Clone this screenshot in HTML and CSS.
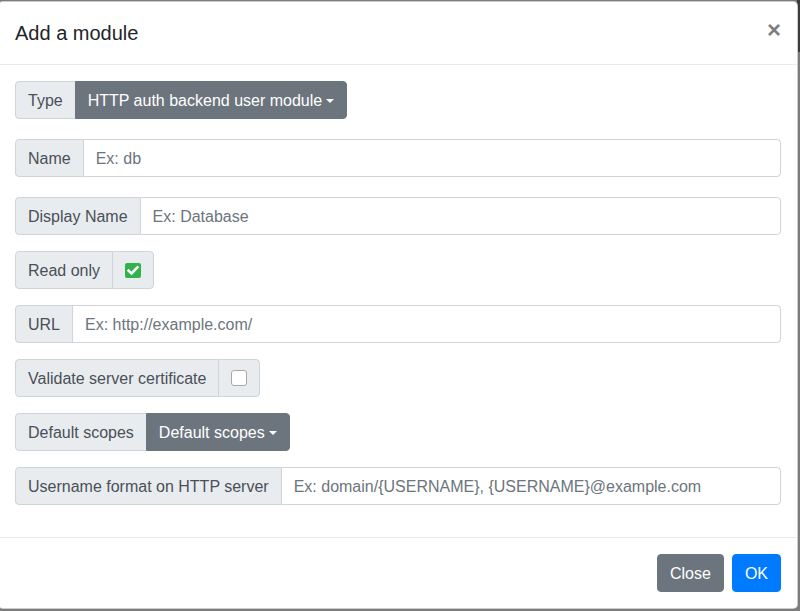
FILE: index.html
```html
<!DOCTYPE html>
<html lang="en">
<head>
<meta charset="utf-8">
<title>Add a module</title>
<link rel="stylesheet" href="styles.css">
</head>
<body>
<div class="modal">
  <div class="modal-header">
    <h5 class="modal-title">Add a module</h5>
    <button class="close" type="button" aria-label="Close">×</button>
  </div>
  <div class="modal-body">
    <div class="input-group wide-gap">
      <span class="addon">Type</span>
      <button class="btn btn-secondary dropdown-toggle joined" type="button">HTTP auth backend user module</button>
    </div>
    <div class="input-group wide-gap">
      <span class="addon">Name</span>
      <input class="form-control" type="text" placeholder="Ex: db">
    </div>
    <div class="input-group">
      <span class="addon">Display Name</span>
      <input class="form-control" type="text" placeholder="Ex: Database">
    </div>
    <div class="input-group">
      <span class="addon">Read only</span>
      <span class="addon check-addon"><input class="check" type="checkbox" checked></span>
    </div>
    <div class="input-group">
      <span class="addon">URL</span>
      <input class="form-control" type="text" placeholder="Ex: http://example.com/">
    </div>
    <div class="input-group">
      <span class="addon">Validate server certificate</span>
      <span class="addon check-addon"><input class="check" type="checkbox"></span>
    </div>
    <div class="input-group">
      <span class="addon">Default scopes</span>
      <button class="btn btn-secondary dropdown-toggle joined" type="button">Default scopes</button>
    </div>
    <div class="input-group">
      <span class="addon">Username format on HTTP server</span>
      <input class="form-control" type="text" placeholder="Ex: domain/{USERNAME}, {USERNAME}@example.com">
    </div>
  </div>
  <div class="modal-footer">
    <button class="btn btn-secondary" type="button">Close</button>
    <button class="btn btn-primary" type="button">OK</button>
  </div>
</div>
</body>
</html>
```
FILE: styles.css
```css
* { box-sizing: border-box; }

html, body {
  margin: 0;
  height: 100%;
}

body {
  background:
    linear-gradient(to right, transparent 797px, #3b3b3b 797px) top left / 100% 52px no-repeat,
    #7c7c7c;
  font-family: "Liberation Sans", Arial, sans-serif;
  font-size: 16px;
  line-height: 1.5;
  color: #212529;
  overflow: hidden;
}

.modal {
  width: 800px;
  margin: 1px 0 0 -2px;
  background: #fff;
  border: 1px solid rgba(0, 0, 0, 0.2);
  border-radius: 4.8px;
  display: flex;
  flex-direction: column;
}

.modal-header {
  display: flex;
  align-items: flex-start;
  justify-content: space-between;
  padding: 16px;
  border-bottom: 1px solid #e9ecef;
}

.modal-title {
  margin: 0;
  font-size: 20px;
  font-weight: 400;
  line-height: 1.5;
}

.close {
  padding: 16px;
  margin: -16px -16px -16px auto;
  background: transparent;
  border: 0;
  font-family: "Liberation Sans", Arial, sans-serif;
  font-size: 24px;
  font-weight: 700;
  line-height: 1;
  color: #000;
  text-shadow: 0 1px 0 #fff;
  opacity: 0.5;
  cursor: pointer;
}

.modal-body {
  padding: 16px;
}

.input-group {
  display: flex;
  align-items: stretch;
  margin-bottom: 16px;
}

.input-group.wide-gap {
  margin-bottom: 20px;
}

.addon {
  display: flex;
  align-items: center;
  padding: 7px 12px 5px;
  font-size: 16px;
  line-height: 1.5;
  color: #495057;
  background: #e9ecef;
  border: 1px solid #ced4da;
  border-radius: 4px;
  white-space: nowrap;
}

.input-group > .addon:first-child {
  border-top-right-radius: 0;
  border-bottom-right-radius: 0;
}

.input-group > .addon + .addon {
  margin-left: -1px;
  border-top-left-radius: 0;
  border-bottom-left-radius: 0;
}

.check-addon {
  padding: 6px 12px;
}

.check {
  appearance: none;
  -webkit-appearance: none;
  margin: 0;
  width: 16px;
  height: 16px;
  border: 1px solid #a9a9a9;
  border-radius: 3px;
  background: #fff;
  display: block;
}

.check:checked {
  width: 16px;
  height: 15px;
  border: 0;
  border-radius: 2px;
  background: #2fb34a url("data:image/svg+xml,%3Csvg xmlns='http://www.w3.org/2000/svg' viewBox='0 0 16 15'%3E%3Cpath d='M3.6 7.6 6.6 10.4 12.4 4.4' fill='none' stroke='%23fff' stroke-width='2.6' stroke-linecap='square'/%3E%3C/svg%3E") center / 16px 15px no-repeat;
}

.form-control {
  flex: 1 1 auto;
  min-width: 0;
  margin-left: -1px;
  height: 38px;
  padding: 7px 12px 5px;
  font-family: "Liberation Sans", Arial, sans-serif;
  font-size: 16px;
  line-height: 1.5;
  color: #495057;
  background: #fff;
  border: 1px solid #ced4da;
  border-radius: 0 4px 4px 0;
}

.form-control::placeholder {
  color: #6c757d;
  opacity: 1;
}

.btn {
  display: inline-block;
  padding: 7px 12px 5px;
  font-family: "Liberation Sans", Arial, sans-serif;
  font-size: 16px;
  line-height: 1.5;
  font-weight: 400;
  border: 1px solid transparent;
  border-radius: 4px;
  cursor: pointer;
  white-space: nowrap;
}

.btn.joined {
  margin-left: -1px;
  border-top-left-radius: 0;
  border-bottom-left-radius: 0;
}

.btn-secondary {
  color: #fff;
  background: #6c757d;
  border-color: #6c757d;
}

.btn-primary {
  color: #fff;
  background: #007bff;
  border-color: #007bff;
}

.dropdown-toggle::after {
  content: "";
  display: inline-block;
  margin-left: 4px;
  vertical-align: 3px;
  border-top: 4.8px solid;
  border-right: 4.8px solid transparent;
  border-left: 4.8px solid transparent;
  border-bottom: 0;
}

.modal-footer {
  display: flex;
  align-items: center;
  justify-content: flex-end;
  padding: 12px;
  border-top: 1px solid #e9ecef;
}

.modal-footer > .btn {
  margin: 4px;
}
```
